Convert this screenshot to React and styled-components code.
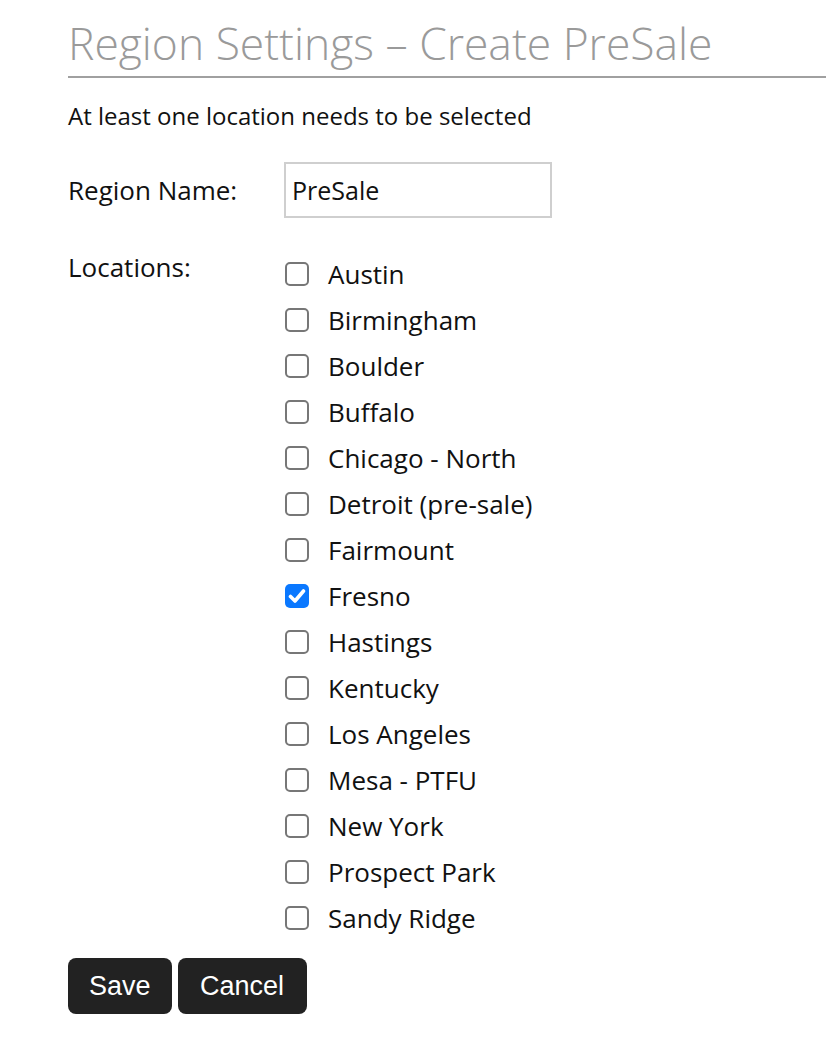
import React, { useState } from "react";
import styled, { createGlobalStyle } from "styled-components";

const GlobalStyle = createGlobalStyle`
  html, body {
    margin: 0;
    padding: 0;
    background: #fff;
  }
  body {
    font-family: "Open Sans", "Liberation Sans", sans-serif;
    color: #111;
  }
`;

const Page = styled.div`
  padding: 19px 0 0 68px;
`;

const Title = styled.h1`
  margin: 0;
  padding-bottom: 9px;
  font-size: 44.4px;
  font-weight: 300;
  line-height: 48px;
  color: #9a9a9a;
  border-bottom: 2px solid #a0a0a0;
  white-space: nowrap;
`;

const Notice = styled.p`
  margin: 22px 0 0;
  font-size: 24px;
  line-height: 32px;
`;

const Form = styled.form`
  margin-top: 30px;
  display: flex;
  flex-direction: column;
`;

const Row = styled.div`
  display: grid;
  grid-template-columns: 216px auto;
  align-items: ${({ $top }) => ($top ? "start" : "center")};
  margin-bottom: ${({ $gap }) => $gap || 0}px;
`;

const Label = styled.label`
  font-size: 26px;
  line-height: 32px;
`;

const TextInput = styled.input`
  width: 268px;
  height: 56px;
  box-sizing: border-box;
  border: 2px solid #cfcfcf;
  padding: 0 6px;
  font-family: "Open Sans", "Liberation Sans", sans-serif;
  font-size: 25px;
  color: #111;
  outline: none;
`;

const List = styled.div`
  display: flex;
  flex-direction: column;
`;

const Option = styled.label`
  display: flex;
  align-items: center;
  gap: 19px;
  height: 46px;
  font-size: 26px;
  cursor: pointer;
`;

const Box = styled.span`
  width: 24px;
  height: 24px;
  box-sizing: border-box;
  border-radius: 5px;
  margin-left: 1px;
  border: ${({ $on }) => ($on ? "none" : "2px solid #777")};
  background: ${({ $on }) => ($on ? "#0a78ff" : "#fff")};
  display: flex;
  align-items: center;
  justify-content: center;
  flex-shrink: 0;
`;

const HiddenBox = styled.input`
  display: none;
`;

const Buttons = styled.div`
  display: flex;
  gap: 6px;
  margin-top: 17px;
`;

const Button = styled.button`
  height: 56px;
  padding: 0 ${({ $pad }) => $pad || 21}px;
  border: none;
  border-radius: 8px;
  background: #222;
  color: #fff;
  font-family: "Liberation Sans", Arial, sans-serif;
  font-size: 27px;
  cursor: pointer;
`;

const locations = [
  "Austin",
  "Birmingham",
  "Boulder",
  "Buffalo",
  "Chicago - North",
  "Detroit (pre-sale)",
  "Fairmount",
  "Fresno",
  "Hastings",
  "Kentucky",
  "Los Angeles",
  "Mesa - PTFU",
  "New York",
  "Prospect Park",
  "Sandy Ridge",
];

const Check = () => (
  <svg width="18" height="16" viewBox="0 0 18 16">
    <path
      d="M2.5 8.5 L7 13 L15.5 3"
      fill="none"
      stroke="#fff"
      strokeWidth="3.6"
      strokeLinecap="round"
      strokeLinejoin="round"
    />
  </svg>
);

const App = () => {
  const [name, setName] = useState("PreSale");
  const [selected, setSelected] = useState({ Fresno: true });

  const toggle = (loc) => setSelected((s) => ({ ...s, [loc]: !s[loc] }));

  return (
    <Page>
      <GlobalStyle />
      <Title>Region Settings – Create PreSale</Title>
      <Notice>At least one location needs to be selected</Notice>
      <Form onSubmit={(e) => e.preventDefault()}>
        <Row $gap={33}>
          <Label htmlFor="region-name">Region Name:</Label>
          <TextInput
            id="region-name"
            value={name}
            onChange={(e) => setName(e.target.value)}
          />
        </Row>
        <Row $top>
          <Label>Locations:</Label>
          <List>
            {locations.map((loc) => (
              <Option key={loc}>
                <HiddenBox
                  type="checkbox"
                  checked={!!selected[loc]}
                  onChange={() => toggle(loc)}
                />
                <Box $on={!!selected[loc]}>{selected[loc] && <Check />}</Box>
                {loc}
              </Option>
            ))}
          </List>
        </Row>
        <Buttons>
          <Button type="submit">Save</Button>
          <Button type="button" $pad={22.5}>
            Cancel
          </Button>
        </Buttons>
      </Form>
    </Page>
  );
};

export default App;
